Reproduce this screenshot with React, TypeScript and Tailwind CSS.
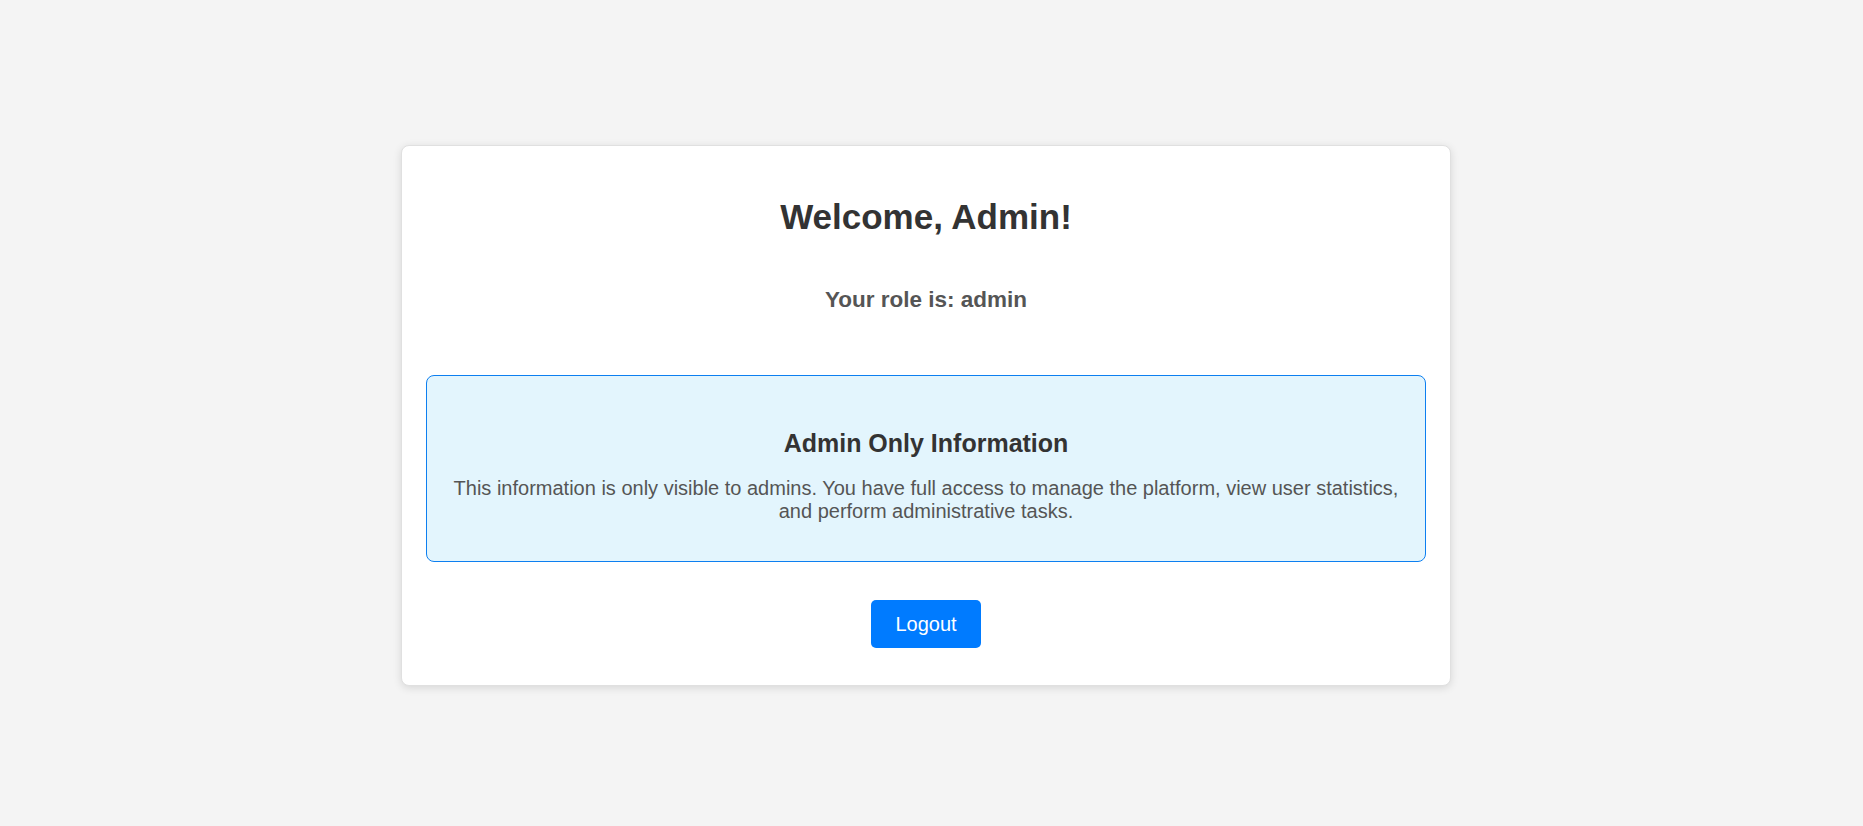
import React from "react";

export default function App() {
  return (
    <div
      className="min-h-screen w-full bg-[#f4f4f4] flex justify-center pr-[11px] pt-[145px]"
      style={{ fontFamily: '"Liberation Sans", Arial, sans-serif' }}
    >
      <div className="w-[1050px] h-[541px] bg-white border border-[#e0e0e0] rounded-[8px] shadow-[0_2px_8px_rgba(0,0,0,0.12)] px-[24px] pt-[25px] text-center">
        <h1 className="mt-[26px] text-[35px] leading-[40px] font-bold text-[#333]">
          Welcome, Admin!
        </h1>
        <h2 className="mt-[50px] text-[22.5px] leading-[25px] font-bold text-[#555]">
          Your role is: admin
        </h2>
        <div className="mt-[63px] h-[187px] bg-[#e3f5fd] border border-[#0d7ff0] rounded-[8px] px-[20px]">
          <h3 className="mt-[53px] text-[25px] leading-[29px] font-bold text-[#333]">
            Admin Only Information
          </h3>
          <p className="mt-[19px] text-[20px] leading-[23px] text-[#555]">
            This information is only visible to admins. You have full access to manage the platform, view user statistics, and perform administrative tasks.
          </p>
        </div>
        <div className="mt-[38px] flex justify-center">
          <button className="w-[110px] h-[48px] bg-[#007bff] text-white text-[20px] rounded-[5px]">
            Logout
          </button>
        </div>
      </div>
    </div>
  );
}
